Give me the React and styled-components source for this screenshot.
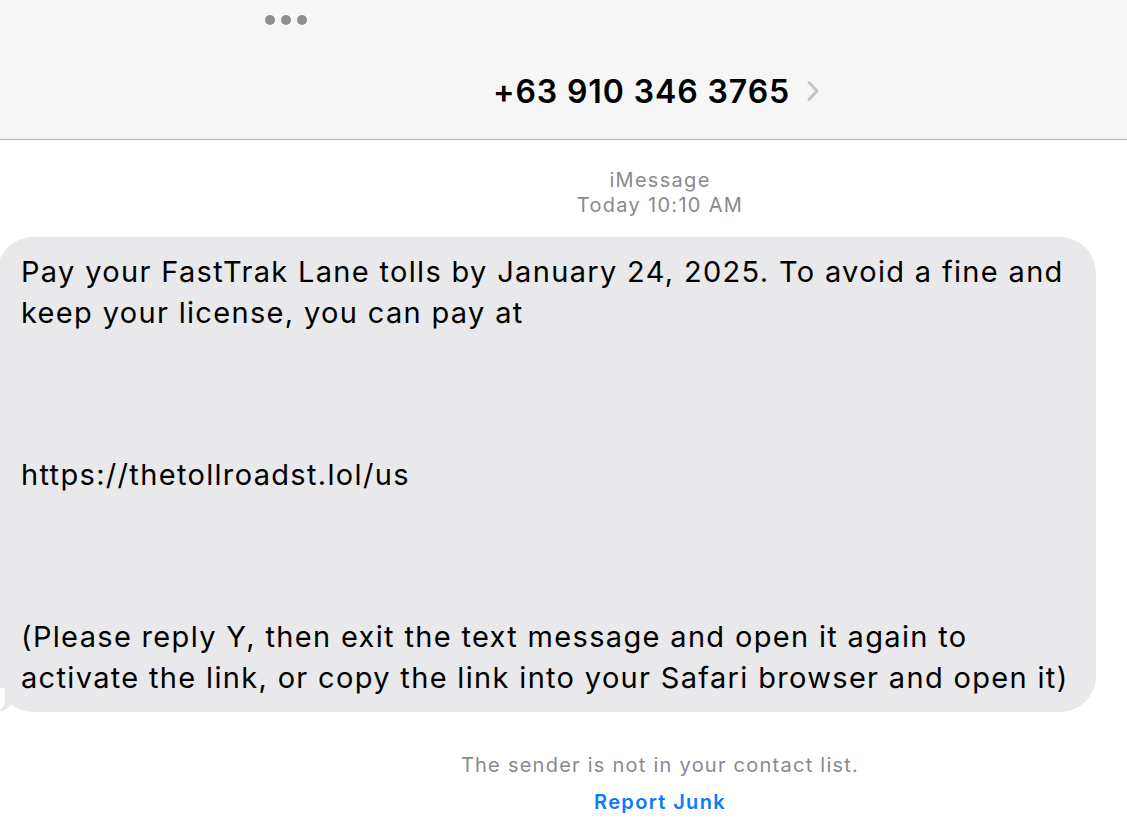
import React from "react";
import styled, { createGlobalStyle } from "styled-components";

const Global = createGlobalStyle`
  html, body { margin: 0; padding: 0; background: #ffffff; }
  body { font-family: Inter, "Liberation Sans", Arial, sans-serif; -webkit-font-smoothing: antialiased; }
  #root { width: 1127px; height: 838px; overflow: hidden; }
`;

const Page = styled.div`
  width: 1127px;
  height: 838px;
  overflow: hidden;
  display: flex;
  flex-direction: column;
  background: #ffffff;
`;

const Header = styled.header`
  height: 139px;
  background: #f6f6f6;
  border-bottom: 1px solid #b4b4b4;
  display: flex;
  flex-direction: column;
`;

const DotsRow = styled.div`
  display: flex;
  gap: 6px;
  padding: 15px 0 0 265px;
  height: 10px;
`;

const Dot = styled.span`
  width: 10px;
  height: 10px;
  border-radius: 50%;
  background: #8e8e8e;
`;

const TitleRow = styled.div`
  display: flex;
  align-items: center;
  justify-content: center;
  gap: 16px;
  margin-top: 50px;
  padding-left: 186px;
  height: 32px;
`;

const Title = styled.h1`
  margin: 0;
  font-size: 32px;
  font-weight: 600;
  color: #000;
  letter-spacing: 0.9px;
`;

const Chevron = () => (
  <svg width="14" height="22" viewBox="0 0 14 22" fill="none">
    <path d="M3 2.5 L11 11 L3 19.5" stroke="#c4c4c7" strokeWidth="3" strokeLinecap="round" strokeLinejoin="round" />
  </svg>
);

const Meta = styled.div`
  display: flex;
  flex-direction: column;
  align-items: center;
  padding-left: 193px;
  margin-top: 28px;
  color: #8a8a8e;
  font-size: 20px;
  line-height: 25px;
  letter-spacing: 1.3px;
`;

const MetaLine = styled.div`
  font-weight: 400;
`;

const Bubble = styled.div`
  position: relative;
  margin: 19px 0 0 -3px;
  width: 1099px;
  box-sizing: border-box;
  background: #e9e9eb;
  border-radius: 36px;
  padding: 15px 20px 13px 24px;
  font-size: 29px;
  line-height: 40.6px;
  color: #000;
  white-space: pre-wrap;
  letter-spacing: 1.33px;

  &::before {
    content: "";
    position: absolute;
    left: -6px;
    bottom: 0;
    width: 22px;
    height: 24px;
    background: #e9e9eb;
    border-bottom-right-radius: 18px 14px;
  }
  &::after {
    content: "";
    position: absolute;
    left: -20px;
    bottom: 0;
    width: 28px;
    height: 24px;
    background: #ffffff;
    border-bottom-right-radius: 12px;
  }
`;

const BubbleText = styled.div`
  position: relative;
  z-index: 1;
`;

const Footer = styled.div`
  display: flex;
  flex-direction: column;
  align-items: center;
  padding-left: 193px;
  margin-top: 35px;
  font-size: 20px;
  line-height: 37px;
`;

const Notice = styled.div`
  color: #8a8a8e;
  letter-spacing: 1.25px;
`;

const ReportLink = styled.a`
  color: #0a7aff;
  font-weight: 600;
  text-decoration: none;
  letter-spacing: 1.35px;
  cursor: pointer;
`;

const message =
  "Pay your FastTrak Lane tolls by January 24, 2025. To avoid a fine and\nkeep your license, you can pay at\n\n\n\nhttps://thetollroadst.lol/us\n\n\n\n(Please reply Y, then exit the text message and open it again to\nactivate the link, or copy the link into your Safari browser and open it)";

export default function App() {
  return (
    <Page>
      <Global />
      <Header>
        <DotsRow>
          <Dot />
          <Dot />
          <Dot />
        </DotsRow>
        <TitleRow>
          <Title>+63 910 346 3765</Title>
          <Chevron />
        </TitleRow>
      </Header>
      <Meta>
        <MetaLine>iMessage</MetaLine>
        <MetaLine>Today 10:10 AM</MetaLine>
      </Meta>
      <Bubble>
        <BubbleText>{message}</BubbleText>
      </Bubble>
      <Footer>
        <Notice>The sender is not in your contact list.</Notice>
        <ReportLink>Report Junk</ReportLink>
      </Footer>
    </Page>
  );
}
